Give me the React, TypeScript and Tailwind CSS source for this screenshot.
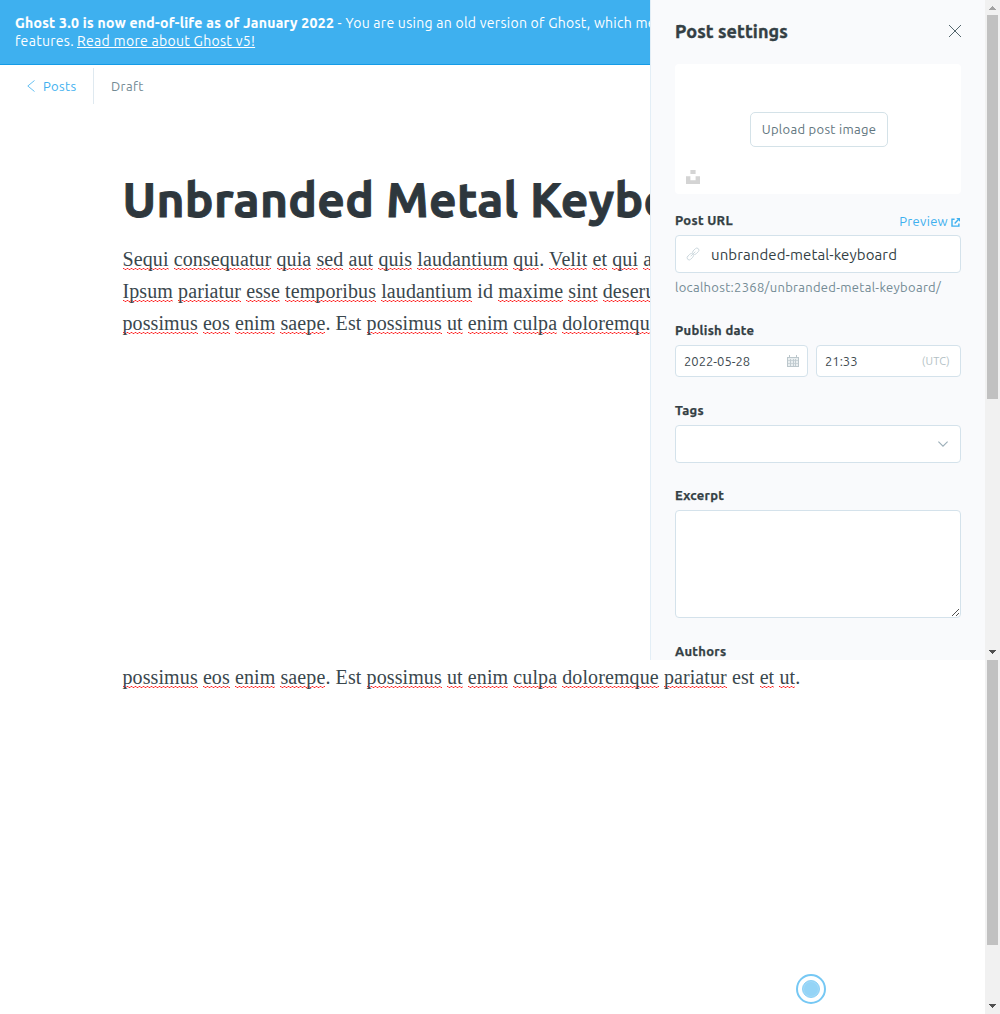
import React from "react";

const BODY_LINES = [
  "Sequi consequatur quia sed aut quis laudantium qui. Velit et qui aut",
  "Ipsum pariatur esse temporibus laudantium id maxime sint deserunt",
  "possimus eos enim saepe. Est possimus ut enim culpa doloremque pariatur est et ut.",
];
const KNOWN_WORDS = ["Est", "id", "est"];

// Two pixel rows, each repeating every four pixels, form the spelling squiggle.
const squiggle =
  "bg-[linear-gradient(90deg,#ff0000dd_1px,#ff000050_1px_2px,transparent_2px_3px,#ff000050_3px),linear-gradient(90deg,transparent_1px,#ff000050_1px_2px,#ff0000dd_2px_3px,#ff000050_3px)] bg-[size:4px_1px] bg-[position:0_20px,0_21px] bg-repeat-x";

function SpellChecked({ text }: { text: string }) {
  return (
    <>
      {text.split(" ").map((word, i) => {
        const dot = word.endsWith(".");
        const core = dot ? word.slice(0, -1) : word;
        return (
          <React.Fragment key={i}>
            {i > 0 ? " " : ""}
            {KNOWN_WORDS.includes(core) ? core : <span className={squiggle}>{core}</span>}
            {dot ? "." : ""}
          </React.Fragment>
        );
      })}
    </>
  );
}

function Scrollbar({ thumb, up }: { thumb: string; up: boolean }) {
  return (
    <div className="flex h-full w-[15px] shrink-0 flex-col items-center bg-[#f1f1f1]">
      {up && (
        <svg className="h-[15px] w-[15px] shrink-0" viewBox="0 0 15 15" shapeRendering="crispEdges">
          <path d="M7 6h1v1h1v1h1v1h1v1H4V9h1V8h1V7h1z" fill="#a3a3a3" />
        </svg>
      )}
      <div className={"w-[11px] shrink-0 bg-[#c1c1c1] " + thumb} />
      <svg className="mt-auto h-[15px] w-[15px] shrink-0" viewBox="0 0 15 15" shapeRendering="crispEdges">
        <path d="M4 5h7v1h-1v1H9v1H8v1H7V8H6V7H5V6H4z" fill="#505050" />
      </svg>
    </div>
  );
}

function Label({ children }: { children: React.ReactNode }) {
  return (
    <div className="h-5 text-[13px] leading-5 font-semibold text-[#343f44] [-webkit-text-stroke:0.25px_#343f44]">
      {children}
    </div>
  );
}

const box = "rounded-[4px] border border-[#d4e2eb] bg-white";

function SettingsPanel() {
  return (
    <aside className="flex h-full w-[335px] shrink-0 flex-col border-l border-[#e3eef6] bg-[#f9fafc] pr-6 pl-6">
      <header className="flex h-16 shrink-0 items-center justify-between pb-[2px]">
        <h4 className="text-[18px] leading-6 font-semibold tracking-[0.1px] text-[#343f44] [-webkit-text-stroke:0.4px_#343f44]">
          Post settings
        </h4>
        <svg className="-mr-px h-[14px] w-[14px]" viewBox="0 0 14 14" stroke="#54666d" strokeWidth="1">
          <path d="M1 1l12 12M13 1L1 13" />
        </svg>
      </header>

      <div className="relative flex h-[130px] shrink-0 items-center justify-center rounded-[4px] bg-white">
        <button className="ml-[2px] h-[35px] w-[138px] rounded-[5px] border border-[#d4e2e8] pt-[2px] text-[13px] whitespace-nowrap text-[#5f757e]">
          Upload post image
        </button>
        <svg className="absolute bottom-[10px] left-[11px] h-[14px] w-[14px]" viewBox="0 0 14 14" fill="#d4d4d4">
          <path d="M4.4 0h5.2v4H4.4zM0 6.2h4.4v4h5.2v-4H14V14H0z" />
        </svg>
      </div>

      <div className="mt-[16px] flex h-[25px] shrink-0 justify-between">
        <Label>Post URL</Label>
        <div className="mt-px flex h-[22px] items-center pr-px text-[13px] text-[#3eb0ef]">
          Preview
          <svg className="ml-[3px] h-[9px] w-[9px]" viewBox="0 0 9 9" fill="none" stroke="#3eb0ef" strokeWidth="1.4">
            <path d="M3.6 1.2H1v6.9h6.9V5.6" />
            <path d="M3.7 5.4L7.2 1.8" />
            <path d="M5.2 0H9v3.8z" fill="#3eb0ef" stroke="none" />
          </svg>
        </div>
      </div>
      <div className={"flex h-[38px] shrink-0 items-center pl-[10px] " + box}>
        <svg className="h-[14px] w-[14px]" viewBox="0 0 24 24" fill="none" stroke="#ccd8de" strokeWidth="1.6" strokeLinecap="round">
          <rect x="-6.2" y="-3.6" width="12.4" height="7.2" rx="3.6" transform="translate(7.3 16.7) rotate(-45)" />
          <rect x="-6.2" y="-3.6" width="12.4" height="7.2" rx="3.6" transform="translate(16.7 7.3) rotate(-45)" />
          <path d="M8.5 15.5l7-7" />
        </svg>
        <span className="ml-[11px] pt-[2px] text-[15px] tracking-[0.1px] text-[#343f44]">unbranded-metal-keyboard</span>
      </div>
      <p className="mt-1 h-5 shrink-0 text-[13px] leading-[20px] text-[#738a94]">localhost:2368/unbranded-metal-keyboard/</p>

      <div className="mt-[23px] h-[25px] shrink-0">
        <Label>Publish date</Label>
      </div>
      <div className="flex h-8 shrink-0 gap-2 text-[13px] tracking-normal text-[#3d4a50]">
        <div className={"flex w-[133px] items-center justify-between pr-2 pl-2 " + box}>
          <span className="pt-[2px]">2022-05-28</span>
          <svg className="h-[12px] w-[12px]" viewBox="0 0 12 12" fill="none" stroke="#bcc7cc" shapeRendering="crispEdges">
            <path d="M0 1.5h12v10.5H0z" fill="#e9eef0" stroke="none" />
            <path d="M0 2.5h12M.5 2v10M11.5 2v10M0 11.5h12M2.5 0v2M9.5 0v2" />
            <path d="M1 5.5h10M1 8.5h10" stroke="#ccd5d9" />
            <path d="M3.5 4v7M6.5 4v7M8.5 4v7" stroke="#c2ccd1" />
          </svg>
        </div>
        <div className={"flex flex-1 items-center justify-between pr-[10px] pl-2 " + box}>
          <span className="pt-[2px]">21:33</span>
          <span className="text-[11px] tracking-[0.2px] text-[#b3bfc5]">(UTC)</span>
        </div>
      </div>

      <div className="mt-[23px] h-[25px] shrink-0">
        <Label>Tags</Label>
      </div>
      <div className={"flex h-[38px] shrink-0 items-center justify-end pr-[12px] pb-px " + box}>
        <svg className="h-[6px] w-[10px]" viewBox="0 0 10 6" fill="none" stroke="#9baeb8" strokeWidth="1.1">
          <path d="M.4.6L5 5.2 9.6.6" />
        </svg>
      </div>

      <div className="mt-[22px] h-[25px] shrink-0">
        <Label>Excerpt</Label>
      </div>
      <div className={"flex h-[108px] shrink-0 items-end justify-end p-px " + box}>
        <svg className="h-[7px] w-[7px]" viewBox="0 0 7 7" fill="#505050" shapeRendering="crispEdges">
          <path d="M0 6h1v1H0zM1 5h1v1H1zM2 4h1v1H2zM3 3h1v1H3zM4 2h1v1H4zM5 1h1v1H5zM6 0h1v1H6zM4 6h1v1H4zM5 5h1v1H5zM6 4h1v1H6z" />
        </svg>
      </div>

      <div className="mt-[23px] shrink-0">
        <Label>Authors</Label>
      </div>
    </aside>
  );
}

export default function App() {
  return (
    <div className="flex h-[1014px] w-[1000px] flex-col overflow-hidden bg-white font-[Ubuntu,'Noto_Sans',sans-serif] tracking-[0.3px]">
      <section className="flex h-[660px] shrink-0 overflow-hidden">
        <main className="h-full w-[650px] shrink-0 overflow-hidden whitespace-nowrap">
          <div className="h-[65px] border-b border-[#159be6] bg-[#3eb0ef] pt-[14px] pl-[15px] text-[14px] leading-[18px] text-white">
            <p>
              <span className="font-semibold [-webkit-text-stroke:0.15px_#fff]">
                Ghost 3.0 is now end-of-life as of January 2022
              </span>
              <span className="tracking-[0.27px]"> - You are using an old version of Ghost, which means</span>
            </p>
            <p>
              features. <a className="-ml-[0.5px] underline">Read more about Ghost v5!</a>
            </p>
          </div>

          <div className="flex h-[42px] items-center text-[13px]">
            <a className="flex h-full w-[77px] items-center pl-[27px] text-[#3eb0ef]">
              <svg className="mr-2 h-[12px] w-[8px]" viewBox="0 0 8 12" fill="none" stroke="#3eb0ef" strokeWidth="0.8">
                <path d="M7.5.5L.8 6l6.7 5.5" />
              </svg>
              <span className="pt-px tracking-[0.4px]">Posts</span>
            </a>
            <div className="ml-4 h-9 w-px bg-[#dfe9f0]" />
            <span className="ml-[17px] pt-px tracking-[0.4px] text-[#738a94]">Draft</span>
          </div>

          <div className="pt-[61px] pl-[122.5px]">
            <h1 className="h-[62px] text-[48px] leading-[62px] font-semibold text-[#2e373d] [-webkit-text-stroke:0.9px_#2e373d]">
              Unbranded Metal Keyboard
            </h1>
            <div className="mt-[13px] font-['Liberation_Serif',serif] text-[20px] leading-8 tracking-[0.1px] text-[#3a474d]">
              {BODY_LINES.map((line) => (
                <p key={line}>
                  <SpellChecked text={line} />
                </p>
              ))}
            </div>
          </div>
        </main>
        <SettingsPanel />
        <Scrollbar thumb="h-[384px]" up />
      </section>

      <section className="relative flex h-[354px] shrink-0 overflow-hidden">
        <div className="h-full flex-1 pt-[1px] pl-[122.5px]">
          <p className="font-['Liberation_Serif',serif] text-[20px] leading-8 tracking-[0.1px] text-[#3a474d]">
            <SpellChecked text={BODY_LINES[2]} />
          </p>
        </div>
        <div className="absolute top-[314px] left-[796px] flex h-[30px] w-[30px] items-center justify-center rounded-full border-2 border-[#76c8f4]">
          <div className="h-[18px] w-[18px] rounded-full border border-[#8ed1f6] bg-[#95d4f6] shadow-[inset_0_0_0_1px_#a3daf8]" />
        </div>
        <Scrollbar thumb="h-[285px]" up={false} />
      </section>
    </div>
  );
}
